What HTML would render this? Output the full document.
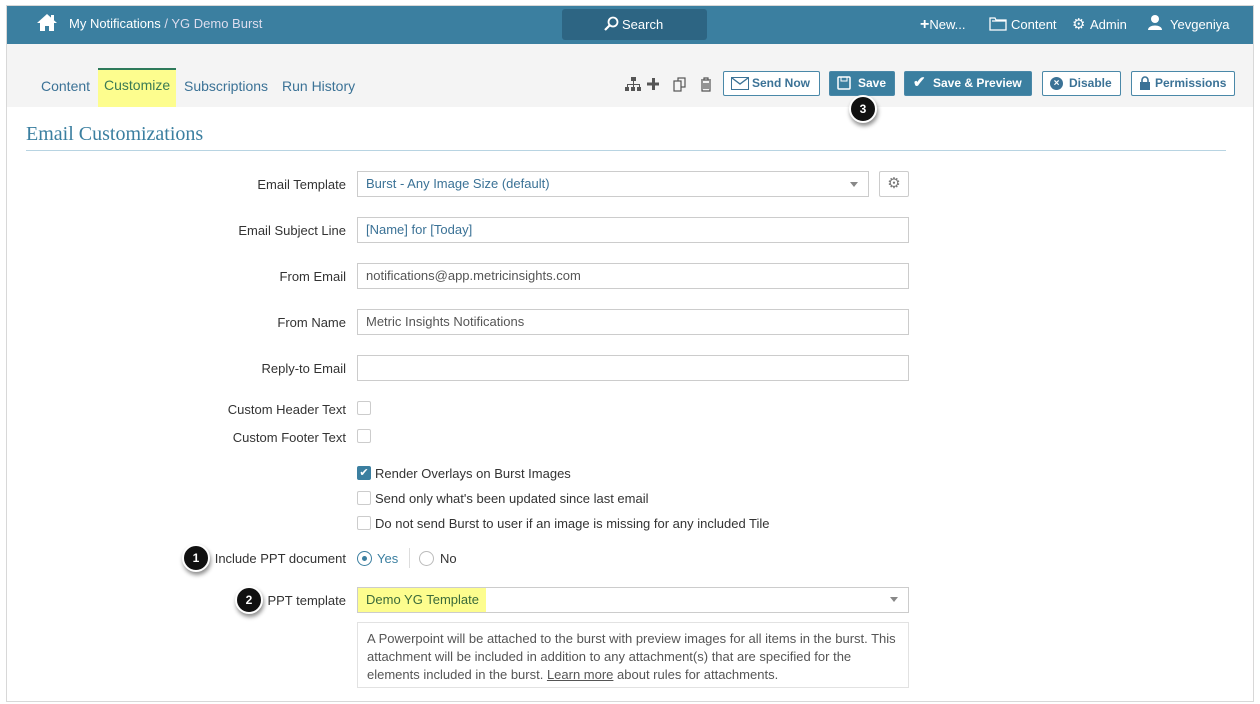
<!DOCTYPE html>
<html><head><meta charset="utf-8"><style>
*{box-sizing:border-box;margin:0;padding:0}
body{width:1260px;height:704px;background:#fff;font-family:"Liberation Sans",sans-serif;position:relative;overflow:hidden;font-size:13px;color:#333}
.frame{position:absolute;left:6px;top:5px;width:1248px;height:697px;border:1px solid #d8d8d8;overflow:hidden}
.hdr{position:absolute;left:7px;top:6px;width:1246px;height:38px;background:#3b7fa0}
.abs{position:absolute}
.wt{color:#fff;font-size:13px}
.tb{position:absolute;left:7px;top:44px;width:1246px;height:63px;background:#f4f4f4}
.tab{position:absolute;top:78px;font-size:14px;color:#3b7296}
.btn{position:absolute;top:71px;height:25px;border:1px solid #4a88a8;border-radius:2px;background:#fff;color:#3b7296;font-weight:bold;font-size:12px;line-height:23px;padding-left:28px}
.btn.p{background:#3b7fa0;color:#fff}
.lbl{position:absolute;right:914px;font-size:13px;color:#333;text-align:right;white-space:nowrap}
.inp{position:absolute;left:357px;width:552px;height:26px;border:1px solid #ccc;font-size:13px;line-height:24px;padding-left:8px;color:#555}
.cb{position:absolute;left:357px;width:14px;height:14px;border:1px solid #ccc;border-radius:2px;background:#fff}
.ct{position:absolute;left:375px;font-size:13px;color:#333}
.badge{position:absolute;width:28px;height:28px;border-radius:50%;background:#111;border:2px solid #fff;box-shadow:1px 3px 4px rgba(0,0,0,.45);color:#fff;font-weight:bold;font-size:12px;text-align:center;line-height:24px}
</style></head><body>
<div class="frame"></div>
<div class="hdr"></div>
<svg class="abs" style="left:36px;top:13px" width="22" height="19" viewBox="0 0 22 19"><path d="M11 1L1 10h3v8h5v-5h4v5h5v-8h3z" fill="#fff"/><rect x="15" y="2" width="3" height="5" fill="#fff"/></svg>
<div class="abs wt" style="left:69px;top:16px">My Notifications <span style="color:#dde">/ YG Demo Burst</span></div>
<div class="abs" style="left:562px;top:9px;width:145px;height:31px;background:#2d6583;border-radius:3px"></div>
<svg class="abs" style="left:603px;top:16px" width="16" height="16" viewBox="0 0 16 16"><circle cx="10" cy="6" r="4.5" fill="none" stroke="#fff" stroke-width="1.8"/><path d="M7 9L2 14" stroke="#fff" stroke-width="2.2"/></svg>
<div class="abs wt" style="left:622px;top:17px">Search</div>
<div class="abs wt" style="left:920px;top:16px"><b style="font-size:16px">+</b>New...</div>
<svg class="abs" style="left:989px;top:16px" width="18" height="15"><path d="M1 2h5l1 2h10v10H1z M3 5h14" fill="none" stroke="#fff" stroke-width="1.3"/></svg>
<div class="abs wt" style="left:1011px;top:17px">Content</div>
<div class="abs wt" style="left:1072px;top:15px;font-size:15px">⚙</div>
<div class="abs wt" style="left:1090px;top:17px">Admin</div>
<svg class="abs" style="left:1147px;top:14px" width="16" height="16"><circle cx="8" cy="5" r="4" fill="#fff"/><path d="M1 16c0-6 14-6 14 0z" fill="#fff"/></svg>
<div class="abs wt" style="left:1170px;top:17px">Yevgeniya</div>
<div class="tb"></div>
<div class="abs" style="left:98px;top:68px;width:78px;height:39px;background:#fdfd8e;border-top:2px solid #2e7a5a"></div>
<div class="tab" style="left:41px">Content</div>
<div class="tab" style="left:104px;top:77px;color:#3a7a55">Customize</div>
<div class="tab" style="left:184px">Subscriptions</div>
<div class="tab" style="left:282px">Run History</div>
<svg class="abs" style="left:625px;top:76px" width="92" height="16" viewBox="0 0 92 16">
<g fill="#555"><rect x="6" y="1" width="5" height="4"/><rect x="8" y="5" width="1" height="3"/><rect x="2" y="8" width="13" height="1"/><rect x="2" y="8" width="1" height="3"/><rect x="8" y="8" width="1" height="3"/><rect x="14" y="8" width="1" height="3"/><rect x="0" y="11" width="4" height="4"/><rect x="6" y="11" width="4" height="4"/><rect x="12" y="11" width="4" height="4"/>
<rect x="27" y="2" width="3" height="12"/><rect x="22" y="6.5" width="12" height="3"/></g>
<g fill="none" stroke="#555" stroke-width="1.2"><rect x="53" y="2" width="7" height="9"/><rect x="49" y="5" width="7" height="10" fill="#f4f4f4"/><path d="M76 4h10M79 4V2h4v2M77 5v10h8V5M79 7v6M81 7v6M83 7v6"/></g></svg>
<div class="btn" style="left:723px;width:97px">Send Now</div>
<svg class="abs" style="left:731px;top:77px" width="18" height="13"><rect x=".5" y=".5" width="17" height="12" fill="none" stroke="#3b7296"/><path d="M1 1l8 6 8-6" fill="none" stroke="#3b7296" stroke-width="1.4"/></svg>
<div class="btn p" style="left:829px;width:66px">Save</div>
<svg class="abs" style="left:837px;top:76px" width="14" height="14"><rect x="1" y="1" width="12" height="12" rx="1" fill="none" stroke="#fff" stroke-width="1.5"/><rect x="4" y="1" width="6" height="4" fill="none" stroke="#fff"/></svg>
<div class="btn p" style="left:904px;width:128px">Save &amp; Preview</div>
<div class="abs" style="left:913px;top:73px;color:#fff;font-size:15px;font-weight:bold">✔</div>
<div class="btn" style="left:1042px;width:79px;padding-left:26px">Disable</div>
<div class="abs" style="left:1050px;top:77px;width:13px;height:13px;border-radius:50%;background:#3b7296;color:#fff;font-size:10px;line-height:13px;text-align:center;font-weight:bold">×</div>
<div class="btn" style="left:1131px;width:104px;padding-left:23px">Permissions</div>
<svg class="abs" style="left:1139px;top:76px" width="12" height="14"><path d="M3 6V4a3 3 0 016 0v2" fill="none" stroke="#3b7296" stroke-width="1.6"/><rect x="1" y="6" width="10" height="8" fill="#3b7296"/></svg>
<div class="badge" style="left:849px;top:95px">3</div>
<div class="abs" style="left:26px;top:123px;font-family:'Liberation Serif',serif;font-size:20px;color:#3b7fa0">Email Customizations</div>
<div class="abs" style="left:26px;top:150px;width:1200px;height:1px;background:#b8d4e2"></div>
<div class="lbl" style="top:177px">Email Template</div>
<div class="inp" style="top:171px;width:512px;color:#3b7296">Burst - Any Image Size (default)</div>
<div class="abs" style="left:850px;top:182px;border:4px solid transparent;border-top:5px solid #888"></div>
<div class="abs" style="left:879px;top:171px;width:30px;height:26px;border:1px solid #ccc;border-radius:2px;text-align:center;line-height:24px;color:#777;font-size:15px">⚙</div>
<div class="lbl" style="top:223px">Email Subject Line</div>
<div class="inp" style="top:217px;color:#3b7296">[Name] for [Today]</div>
<div class="lbl" style="top:269px">From Email</div>
<div class="inp" style="top:263px">notifications@app.metricinsights.com</div>
<div class="lbl" style="top:315px">From Name</div>
<div class="inp" style="top:309px">Metric Insights Notifications</div>
<div class="lbl" style="top:361px">Reply-to Email</div>
<div class="inp" style="top:355px"></div>
<div class="lbl" style="top:402px">Custom Header Text</div>
<div class="cb" style="top:401px"></div>
<div class="lbl" style="top:430px">Custom Footer Text</div>
<div class="cb" style="top:429px"></div>
<div class="cb" style="top:466px;background:#3b7fa0;border-color:#3b7fa0;color:#fff;font-size:11px;line-height:12px;text-align:center">✔</div>
<div class="ct" style="top:466px">Render Overlays on Burst Images</div>
<div class="cb" style="top:491px"></div>
<div class="ct" style="top:491px">Send only what's been updated since last email</div>
<div class="cb" style="top:516px"></div>
<div class="ct" style="top:516px">Do not send Burst to user if an image is missing for any included Tile</div>
<div class="lbl" style="top:551px">Include PPT document</div>
<div class="abs" style="left:357px;top:551px;width:15px;height:15px;border:1px solid #3b7fa0;border-radius:50%"></div>
<div class="abs" style="left:362px;top:556px;width:5px;height:5px;background:#3b7fa0;border-radius:50%"></div>
<div class="abs" style="left:377px;top:551px;color:#3b7fa0">Yes</div>
<div class="abs" style="left:409px;top:548px;width:1px;height:20px;background:#ddd"></div>
<div class="abs" style="left:419px;top:551px;width:15px;height:15px;border:1px solid #bbb;border-radius:50%"></div>
<div class="abs" style="left:440px;top:551px">No</div>
<div class="badge" style="left:182px;top:544px">1</div>
<div class="lbl" style="top:593px">PPT template</div>
<div class="inp" style="top:587px"></div>
<div class="abs" style="left:358px;top:588px;width:128px;height:24px;background:#fdfd8e;color:#3a6a3a;padding-left:8px;line-height:24px">Demo YG Template</div>
<div class="abs" style="left:890px;top:597px;border:4px solid transparent;border-top:5px solid #888"></div>
<div class="badge" style="left:235px;top:586px">2</div>
<div class="abs" style="left:357px;top:622px;width:552px;height:66px;border:1px solid #e2e2e2;padding:7px 9px;font-size:13px;line-height:18px;color:#555">A Powerpoint will be attached to the burst with preview images for all items in the burst. This attachment will be included in addition to any attachment(s) that are specified for the elements included in the burst. <u>Learn more</u> about rules for attachments.</div>
</body></html>
